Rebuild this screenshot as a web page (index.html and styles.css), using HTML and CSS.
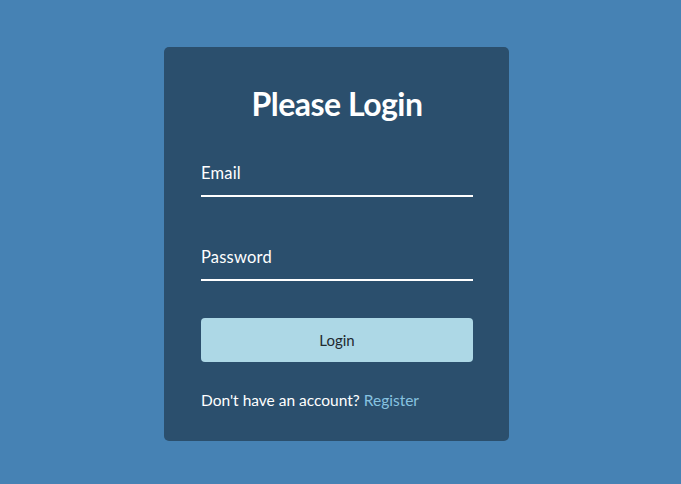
FILE: index.html
```html
<!DOCTYPE html>
<html lang="en">
<head>
<meta charset="utf-8">
<title>Login</title>
<link rel="stylesheet" href="styles.css">
</head>
<body>
<main class="page">
  <form class="card">
    <h1 class="title">Please Login</h1>
    <input class="field field-email" type="email" placeholder="Email">
    <input class="field field-password" type="password" placeholder="Password">
    <button class="btn" type="button">Login</button>
    <p class="footer">Don't have an account? <a class="link" href="#">Register</a></p>
  </form>
</main>
</body>
</html>
```
FILE: styles.css
```css
* { box-sizing: border-box; }
html, body { margin: 0; height: 100%; }
body {
  background: #4682b4;
  font-family: Lato, "Noto Sans", sans-serif;
  color: #fff;
}
.page {
  min-height: 100%;
  display: flex;
  justify-content: center;
  align-items: center;
  padding: 3px 8px 0 0;
}
.card {
  width: 345px;
  background: #2b4f6d;
  border-radius: 5px;
  padding: 37px 36px 31px 37px;
  display: flex;
  flex-direction: column;
}
.title {
  margin: 0 0 31px;
  text-align: center;
  font-size: 32px;
  font-weight: 700;
  line-height: 40px;
  letter-spacing: -0.5px;
}
.field {
  display: block;
  width: 100%;
  background: transparent;
  border: none;
  border-bottom: 2px solid #fff;
  padding: 8px 0 12px;
  font: inherit;
  font-size: 16.5px;
  line-height: 20px;
  letter-spacing: 0.2px;
  color: #fff;
  outline: none;
}
.field::placeholder { color: #fff; opacity: 1; }
.field-password { margin-top: 42px; }
.btn {
  margin-top: 37px;
  height: 44px;
  width: 100%;
  border: none;
  border-radius: 4px;
  background: #add8e6;
  color: #1f2a30;
  font: inherit;
  font-size: 15px;
}
.footer {
  margin: 28px 0 0;
  font-size: 15.5px;
  line-height: 20px;
}
.link {
  color: #87c3e0;
  text-decoration: none;
}
```
